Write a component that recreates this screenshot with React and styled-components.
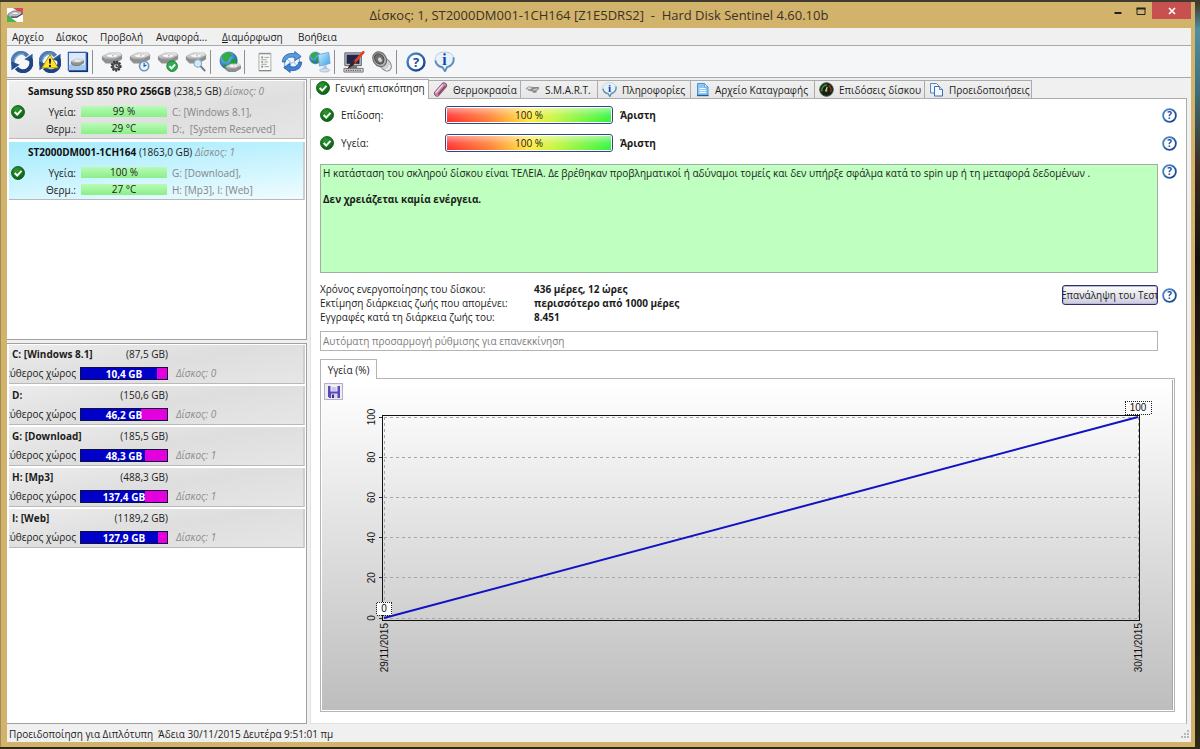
import React from "react";
import styled, { createGlobalStyle, css } from "styled-components";

const UI_FONT = `"Open Sans", "Noto Sans", sans-serif`;

const GlobalStyle = createGlobalStyle`
  * { box-sizing: border-box; }
  body { margin: 0; font-family: ${UI_FONT}; font-size: 10px; line-height: 14px; color: #1c1c1c; }
  button, input { font: inherit; color: inherit; }
`;

const Desktop = styled.div`
  min-height: 100vh;
  display: flex;
  padding: 2px 5px 2px 0;
  background: linear-gradient(to bottom, #3f3b2c 0, #3f3b2c 3px, #4f8fa3 30px, #3d6f7c 90px, #3a2a20 170px, #15100e 260px, #35271b 480px, #1c1b12 600px, #2c2a14 100%);
`;

const Window = styled.div`
  flex: 1;
  min-width: 0;
  display: flex;
  flex-direction: column;
  padding: 0 4px 5px 7px;
  background: #d2b36c;
  box-shadow: inset 1px 0 #a08a55;
`;

const TitleBar = styled.header`
  display: grid;
  grid-template-columns: 85px 1fr 85px;
  align-items: center;
  height: 26px;
`;

const Title = styled.h1`
  margin: 0;
  text-align: center;
  font-size: 13px;
  font-weight: 400;
  line-height: 20px;
  white-space: pre;
  color: #3b3222;
`;

const WindowControls = styled.div`
  display: flex;
  align-self: flex-start;
`;

const WindowButton = styled.button`
  display: flex;
  align-items: center;
  justify-content: center;
  width: ${(p) => (p.$close ? 39 : 23)}px;
  height: 17px;
  padding: 0;
  border: 0;
  background: ${(p) => (p.$close ? "#c75050" : "transparent")};
`;

const MenuBar = styled.nav`
  display: flex;
  height: 18px;
  background: #f0f0f0;
  border-bottom: 1px solid #a9a9a9;
`;

const MenuButton = styled.button`
  flex: none;
  width: ${(p) => p.$width}px;
  padding: 0 0 0 5px;
  border: 0;
  background: none;
  text-align: left;
  white-space: nowrap;
`;

const Toolbar = styled.div`
  display: flex;
  align-items: center;
  height: 32px;
  padding-left: 1px;
  background: #f5f6f8;
  border-bottom: 1px solid #a9a9a9;
`;

const ToolButton = styled.button`
  display: flex;
  align-items: center;
  justify-content: center;
  width: 28px;
  height: 28px;
  padding: 0;
  border: 0;
  background: none;
`;

const ToolSeparator = styled.span`
  width: 6px;
  height: 24px;
  border-left: 1px solid #8f8f8f;
`;

const Body = styled.div`
  flex: 1;
  display: flex;
  min-height: 0;
  padding-top: 1px;
  background: #f0f0f0;
`;

const Sidebar = styled.aside`
  flex: none;
  width: 300px;
  margin-right: 3px;
  display: flex;
  flex-direction: column;
  gap: 3px;
`;

const ListPanel = styled.section`
  flex: ${(p) => (p.$grow ? "1" : "none")};
  min-height: ${(p) => (p.$grow ? 0 : 261)}px;
  display: flex;
  flex-direction: column;
  gap: ${(p) => (p.$grow ? 2 : 3)}px;
  padding: 1px 1px 1px 2px;
  background: #fff;
  border: 1px solid #a0a0a0;
  border-left: 0;
`;

const itemSurface = css`
  border-right: 2px solid #cfcfcf;
  border-bottom: 1px solid #b9b9b9;
`;

const DiskItem = styled.article`
  ${itemSurface}
  display: grid;
  grid-template-columns: 16px 44px 86px 1fr;
  grid-template-rows: 22px 17px 17px;
  column-gap: 5px;
  align-items: center;
  height: 58px;
  padding-left: 2px;
  background: ${(p) =>
    p.$selected
      ? "linear-gradient(175deg, #a6ebfd 0, #bdf1fe 35%, #effcff 100%)"
      : "linear-gradient(170deg, #f0f0f0 0, #dfdfdf 60%, #e6e6e6 100%)"};
`;

const DiskTitle = styled.h2`
  grid-column: 1 / -1;
  margin: 0;
  padding: 0 0 3px 17px;
  font-size: 10px;
  font-weight: 400;
  white-space: nowrap;
  b { color: #111; }
`;

const Muted = styled.span`
  color: #8c8c8c;
  font-style: italic;
`;

const StatusCell = styled.span`
  grid-row: 2 / span 2;
  grid-column: 1;
  display: flex;
  align-self: start;
  padding-top: 2px;
`;

const StatLabel = styled.span`
  grid-column: 2;
  text-align: right;
`;

const StatBar = styled.span`
  height: 11px;
  line-height: 11px;
  text-align: center;
  background: linear-gradient(#b9fbb6, #8aef88);
`;

const VolumeList = styled.span`
  color: #858585;
  white-space: pre;
`;

const VolumeItem = styled.article`
  ${itemSurface}
  display: grid;
  grid-template-columns: 67px 88px 1fr;
  grid-template-rows: 18px 20px;
  column-gap: 4px;
  align-items: center;
  height: 39px;
  background: linear-gradient(170deg, #ececec 0, #dedede 50%, #e6e6e6 100%);
`;

const VolumeHead = styled.div`
  grid-column: 1 / span 2;
  display: flex;
  justify-content: space-between;
  padding-left: 3px;
`;

const ClippedLabel = styled.span`
  grid-column: 1;
  display: flex;
  justify-content: flex-end;
  overflow: hidden;
  white-space: nowrap;
`;

const SpaceBar = styled.span`
  height: 13px;
  line-height: 12px;
  border: 1px solid #101040;
  text-align: center;
  font-weight: 700;
  color: #fff;
`;

const VolumeDisk = styled(Muted)`
  padding-left: 4px;
`;

const Main = styled.main`
  flex: 1;
  min-width: 0;
  display: flex;
  flex-direction: column;
`;

const TabStrip = styled.div`
  display: flex;
  align-items: flex-end;
  height: 19px;
`;

const Tab = styled.button`
  flex: none;
  display: flex;
  align-items: center;
  gap: 5px;
  width: ${(p) => p.$width}px;
  height: ${(p) => (p.$active ? 20 : 18)}px;
  margin-bottom: ${(p) => (p.$active ? -1 : 0)}px;
  padding: 0 0 ${(p) => (p.$active ? 3 : 0)}px ${(p) => (p.$active ? 5 : 4)}px;
  border: 1px solid #acacac;
  border-left-width: ${(p) => (p.$active ? 1 : 0)}px;
  border-bottom: 0;
  background: ${(p) => (p.$active ? "#fff" : "linear-gradient(#f0f0f0, #e6e6e6)")};
  position: relative;
  white-space: nowrap;
`;

const Page = styled.section`
  flex: 1;
  display: flex;
  flex-direction: column;
  margin-right: 4px;
  padding: 2px 9px 11px 9px;
  background: #fff;
  border: 1px solid #acacac;
  border-left-color: #e0e0e0;
  border-bottom-color: #e0e0e0;
`;

const Row = styled.div`
  display: flex;
  align-items: ${(p) => (p.$top ? "flex-start" : "center")};
  gap: 4px;
`;

const GaugeRow = styled(Row)`
  height: 28px;
`;

const ActionRow = styled(Row)`
  padding-top: 3px;
`;

const GaugeLabel = styled.span`
  display: flex;
  align-items: center;
  gap: 7px;
  width: 121px;
`;

const Gauge = styled.span`
  width: 168px;
  height: 18px;
  padding: 1px;
  border: 1px solid #34457e;
  border-radius: 3px;
  background: #fff;
`;

const GaugeFill = styled.span`
  display: block;
  height: 14px;
  line-height: 14px;
  text-align: center;
  background: linear-gradient(rgba(255, 255, 255, 0.5), rgba(255, 255, 255, 0.15) 50%, rgba(255, 255, 255, 0)),
    linear-gradient(to right, #ff2a2a 0, #ff7a30 25%, #ffe93a 50%, #c8f53c 65%, #2cf53a 100%);
`;

const Rating = styled.b`
  flex: 1;
  padding-left: 3px;
`;

const HelpButton = styled.button`
  display: flex;
  width: 15px;
  height: 15px;
  padding: 0;
  border: 0;
  background: none;
`;

const Message = styled.div`
  flex: 1;
  min-height: 109px;
  padding: 2px;
  background: #bfffbf;
  border: 1px solid #9fb09f;
  line-height: 13px;
  p { margin: 0 0 13px; }
`;

const Facts = styled.dl`
  flex: 1;
  display: grid;
  grid-template-columns: 214px 1fr;
  margin: 0;
  dt { white-space: nowrap; }
  dd { margin: 0; font-weight: 700; }
`;

const Spaced = styled.div`
  margin-top: ${(p) => p.$gap}px;
`;

const RetestButton = styled.button`
  display: flex;
  align-items: center;
  justify-content: center;
  width: 96px;
  height: 20px;
  padding: 0;
  overflow: hidden;
  white-space: nowrap;
  border: 1px solid #2f2c66;
  border-radius: 3px;
  background: linear-gradient(#fdfdfd, #dcdce6 70%, #c9c9dc);
  box-shadow: inset 0 0 0 1px #b9b8dc;
`;

const NoteInput = styled.input`
  height: 20px;
  margin: 7px 19px 8px 0;
  padding: 0 2px;
  border: 1px solid #b4b4b4;
  background: #fff;
  color: #7d7d7d;
`;

const ChartTab = styled.button`
  align-self: flex-start;
  position: relative;
  height: 20px;
  width: 57px;
  margin-bottom: -1px;
  padding: 0;
  border: 1px solid #b4b4b4;
  border-bottom: 0;
  background: #fff;
`;

const ChartPanel = styled.div`
  flex: 1;
  display: flex;
  margin-right: 2px;
  padding: 1px;
  border: 1px solid #b4b4b4;
`;

const ChartSurface = styled.div`
  flex: 1;
  display: flex;
  flex-direction: column;
  align-items: stretch;
  padding: 3px 32px 89px 2px;
  border-right: 1px solid #a8a8a8;
  background: linear-gradient(#ffffff 0, #f6f6f6 15%, #bdbdbd 100%);
`;

const SaveButton = styled.button`
  display: flex;
  align-items: center;
  justify-content: center;
  width: 19px;
  height: 17px;
  padding: 0;
  border: 1px solid #b5b0c8;
  background: #ececf2;
`;

const PlotFrame = styled.div`
  flex: 1;
  display: flex;
  min-height: 160px;
  margin: 15px 0 0 58px;
  padding: 1px 1px 2px;
  border: 1px solid #111;
`;

const PlotSvg = styled.svg`
  flex: 1;
  width: 100%;
  height: auto;
  overflow: visible;
  font-family: "Liberation Sans", Arial, sans-serif;
  font-size: 10px;
  fill: #111;
`;

const StatusBar = styled.footer`
  display: flex;
  align-items: center;
  justify-content: space-between;
  height: 18px;
  padding: 1px 2px 0;
  background: #f0f0f0;
`;

/* ---------- icons ---------- */

const Icon = ({ size = 24, box = 24, children }) => (
  <svg width={size} height={size} viewBox={`0 0 ${box} ${box}`} aria-hidden="true">
    {children}
  </svg>
);

const HiddenSvg = styled.svg`
  position: absolute;
`;

const Defs = () => (
  <HiddenSvg width="0" height="0" aria-hidden="true">
    <defs>
      <linearGradient id="blue" x1="0" y1="0" x2="0" y2="1">
        <stop offset="0" stopColor="#7ba6d2" />
        <stop offset="1" stopColor="#1b3f78" />
      </linearGradient>
      <linearGradient id="metal" x1="0" y1="0" x2="0" y2="1">
        <stop offset="0" stopColor="#f2f2f2" />
        <stop offset="1" stopColor="#a5a5a5" />
      </linearGradient>
      <linearGradient id="sky" x1="0" y1="0" x2="1" y2="1">
        <stop offset="0" stopColor="#c9efff" />
        <stop offset="1" stopColor="#3f9fe6" />
      </linearGradient>
      <radialGradient id="ocean" cx="0.35" cy="0.3" r="0.8">
        <stop offset="0" stopColor="#7fd0ff" />
        <stop offset="1" stopColor="#0d4ba8" />
      </radialGradient>
      <radialGradient id="leaf" cx="0.4" cy="0.3" r="0.8">
        <stop offset="0" stopColor="#2c9a35" />
        <stop offset="1" stopColor="#045a0b" />
      </radialGradient>
      <linearGradient id="ring" x1="0" y1="0" x2="1" y2="1">
        <stop offset="0" stopColor="#4f93d8" />
        <stop offset="1" stopColor="#123a86" />
      </linearGradient>
    </defs>
  </HiddenSvg>
);

const RefreshArt = () => (
  <g>
    <path d="M3.600 16.500A9 9 0 0 1 18 5.500" fill="none" stroke="#4d7db3" strokeWidth="4.400" />
    <path d="M4 10A9 9 0 0 1 14 3.500" fill="none" stroke="#86aed6" strokeWidth="1.500" />
    <path d="M23.500 3v9.500L14.500 9z" fill="#2c5a97" />
    <path d="M20.400 7.500A9 9 0 0 1 6 18.500" fill="none" stroke="#1f4480" strokeWidth="4.400" />
    <path d="M.5 21v-9.500L9.500 15z" fill="#24508e" />
  </g>
);

const DiskArt = () => (
  <g>
    <path d="M1 6.500 9 2.500h12l2 2.500v4l-8 4.500H5L1 9.500z" fill="#8f8f8f" />
    <path d="M1 6 9 2h12l2 2.500-8 4.500H5z" fill="url(#metal)" stroke="#9a9a9a" strokeWidth=".5" />
    <ellipse cx="12" cy="5.200" rx="6" ry="2" fill="#fafafa" stroke="#b5b5b5" strokeWidth=".6" />
    <circle cx="13" cy="5.200" r=".8" fill="#999" />
  </g>
);

const GlobeArt = ({ cx, cy, r }) => (
  <g transform={`translate(${cx} ${cy}) scale(${r / 10})`}>
    <circle r="10" fill="url(#ocean)" stroke="#134a8d" strokeWidth=".6" />
    <path d="M-8-5C-5-9-1-10 2-9.500L4-6 1-3-1 1-4 2-7-1z" fill="#2fae3f" />
    <path d="M3-1 8-3 9.500 1 7 6 3 9 1 5z" fill="#239a35" />
    <path d="M-6 4-2 5-2 9-5 8z" fill="#239a35" />
  </g>
);

const art = {
  refresh: <RefreshArt />,
  refreshWarn: (
    <g>
      <RefreshArt />
      <path d="M12 4 21 18.500H3z" fill="#ffe62b" stroke="#9b7a00" strokeWidth=".9" strokeLinejoin="round" />
      <path d="M10.800 8.500h2.400l-.5 5.500h-1.400z" fill="#111" />
      <circle cx="12" cy="16.300" r="1.200" fill="#111" />
    </g>
  ),
  diskPanel: (
    <g>
      <path d="M2 1.500h21v21.500H2z" fill="#14336b" />
      <path d="M1.500 1.500h19.500v19.500H1.500z" fill="#dbe9f9" stroke="#2f62ad" strokeWidth="1.300" />
      <path d="M2 15h18v5H2z" fill="#a9c8ee" />
      <g transform="translate(4 7.500) scale(.62)"><path d="M1 6v5l5 3h9l8-5V4z" fill="#555" /><DiskArt /></g>
    </g>
  ),
  diskGear: (
    <g>
      <DiskArt />
      <circle cx="16.500" cy="16.500" r="5" fill="#5a5a5a" stroke="#333" strokeWidth="2" strokeDasharray="2 1.300" />
      <circle cx="16.500" cy="16.500" r="3" fill="#cfcfcf" stroke="#3a3a3a" />
      <path d="M16.500 14.500v2.300h2" stroke="#222" fill="none" />
    </g>
  ),
  diskClock: (
    <g>
      <DiskArt />
      <circle cx="16.500" cy="16.500" r="5" fill="#eaf4fc" stroke="#7394b4" strokeWidth="1.800" />
      <path d="M16.500 13v3.700l2.500-1.500" stroke="#1f5ea8" strokeWidth="1.300" fill="none" />
    </g>
  ),
  diskCheck: (
    <g>
      <DiskArt />
      <circle cx="16.500" cy="16.500" r="5.800" fill="#2fae4f" stroke="#1b7a34" />
      <path d="m13.500 16.500 2.300 2.500 4-4.500" stroke="#fff" strokeWidth="2" fill="none" />
    </g>
  ),
  diskFind: (
    <g>
      <DiskArt />
      <circle cx="14" cy="13.500" r="4" fill="#cfeaf8" stroke="#8fb2c6" strokeWidth="1.300" />
      <path d="m17 16.500 5 5.500" stroke="#6d7780" strokeWidth="2" />
    </g>
  ),
  globeDisk: (
    <g>
      <GlobeArt cx={10.5} cy={10.5} r={9.5} />
      <g transform="translate(6.500 12.500) scale(.75)"><path d="M1 7v4l5 3h9l8-5V5z" fill="#8b8b8b" /><DiskArt /></g>
    </g>
  ),
  report: (
    <g>
      <path d="M6.500 2.500h13v19h-13z" fill="#f6f8f6" stroke="#a5aaa5" />
      <path d="M7 3h12M6.500 21.500h13.500" stroke="#777" />
      <path d="M9 7h2M9 12h2M9 17h2" stroke="#6f8a78" strokeWidth="1.800" />
      <path d="M12.500 7h5M12.500 12h4M12.500 17h5M9 9.500h6M9 14.500h6" stroke="#9aa09a" />
    </g>
  ),
  mailSync: (
    <g>
      <path d="M4 6h16v13H4z" fill="#eef6fe" stroke="#6c9bd2" />
      <path d="m4 6.500 8 7 8-7M4 19l6-7M20 19l-6-7" fill="none" stroke="#8db4de" />
      <path d="M1.500 12C1.500 5 8 1.500 15 3V.5L22 6l-7 4.500V7C9.500 6 6 7 4.500 12z" fill="#5a9be6" stroke="#1c4f9c" strokeWidth=".8" />
      <path d="M22.500 12c0 7-6 10.500-12.500 9v2.500L3 18l7-4.500V17c5.500 1 8 0 9.500-5z" fill="#3f82d8" stroke="#1c4f9c" strokeWidth=".8" />
    </g>
  ),
  globeScreen: (
    <g>
      <GlobeArt cx={7} cy={7.5} r={6.5} />
      <path d="M10 4 21.500 1.500 23 13.500 11.500 16.500z" fill="url(#sky)" stroke="#6fa9d8" />
      <path d="m15 16 4-1 1 4-4 .5z" fill="#a9cbe6" />
      <ellipse cx="17" cy="21" rx="5.500" ry="2" fill="#cfdfec" stroke="#93aec4" strokeWidth=".7" />
    </g>
  ),
  screenBrush: (
    <g>
      <path d="M2 2h18v14H2z" fill="#b9bcc6" stroke="#55585f" />
      <path d="M4 4h14v10H4z" fill="#20264e" />
      <path d="M7 16h8l1 3H6z" fill="#777" />
      <path d="M1 19h21v4H1z" fill="#d5d5d5" stroke="#555" strokeWidth=".8" />
      <path d="M3 21h17" stroke="#333" strokeDasharray="1.500 1" />
      <path d="m22 1.500-9.500 11" stroke="#e0441e" strokeWidth="3" strokeLinecap="round" />
      <path d="m13.500 11-2 4.500L4.500 20c2-3 2.500-5.500 5.500-8z" fill="#38211a" />
    </g>
  ),
  speaker: (
    <g>
      <ellipse cx="16" cy="15" rx="5.500" ry="7.500" transform="rotate(-35 16 15)" fill="#d2d2d2" stroke="#858585" />
      <ellipse cx="9.500" cy="9" rx="7" ry="8.500" transform="rotate(-35 9.500 9)" fill="#b3b3b3" stroke="#6c6c6c" strokeWidth="1.200" />
      <ellipse cx="9" cy="8.500" rx="4.700" ry="6" transform="rotate(-35 9 8.500)" fill="#6d6d6d" stroke="#444" />
      <ellipse cx="9.800" cy="9.500" rx="2" ry="2.600" transform="rotate(-35 9.800 9.500)" fill="#d5d5d5" />
      <path d="M16 20.500c2.500-.5 4.500-2.500 4.500-5" stroke="#f5f5f5" strokeWidth="1.500" fill="none" />
    </g>
  ),
};

const HelpIcon = ({ size = 15 }) => (
  <Icon size={size} box={20}>
    <circle cx="10" cy="10" r="8.500" fill="#fff" stroke="url(#ring)" strokeWidth="2.400" />
    <text x="10" y="14.800" textAnchor="middle" fontFamily="Open Sans, sans-serif" fontWeight="700" fontSize="13" fill="#1d4c9e">?</text>
  </Icon>
);

const InfoIcon = ({ size = 15 }) => (
  <Icon size={size} box={20}>
    <path d="M10 1C4.500 1 1 4 1 8.500 1 12.500 4 15 8 15.500L10.500 19.500 12.500 15.300C16.500 14.500 19 12 19 8.500 19 4 15.500 1 10 1z" fill="#e6f2fa" stroke="#b4cde0" />
    <path d="M18.500 6c1 4-1.500 8.500-6 9.300l-2 4-2.500-3.800C5 15 2 12.500 1.300 9" fill="none" stroke="#5f8fb8" strokeWidth="1.800" />
    <text x="10" y="13.300" textAnchor="middle" fontFamily="Liberation Serif, serif" fontWeight="700" fontSize="15" fill="#1546a8">i</text>
  </Icon>
);

const CheckIcon = () => (
  <Icon size={14} box={14}>
    <circle cx="7" cy="7" r="6.500" fill="url(#leaf)" stroke="#07520d" strokeWidth=".8" />
    <path d="m3.700 7 2.500 2.600 4.300-4.800" fill="none" stroke="#fff" strokeWidth="2" />
  </Icon>
);

const tabIcons = {
  check: <CheckIcon />,
  thermo: (
    <Icon size={15} box={15}>
      <path d="M4 11.500 11 3.500" stroke="#7a4a66" strokeWidth="6" strokeLinecap="round" />
      <path d="M4 11.500 11 3.500" stroke="#c58aa8" strokeWidth="4.500" strokeLinecap="round" />
      <path d="M3 10.500 9.500 3" stroke="#f1dbe6" strokeWidth="1.300" strokeLinecap="round" />
      <path d="M5.500 12 12 4.500" stroke="#8e3d63" strokeWidth="1.200" strokeLinecap="round" />
    </Icon>
  ),
  smart: (
    <Icon size={15} box={24}>
      <g transform="translate(0 5)">
        <path d="M1 5 7 2l5 1 10 0 1 2-4 3-1 4-5 0-1-2-6-1z" fill="#8d8d8d" />
        <ellipse cx="7" cy="5" rx="4" ry="2" fill="#e0e0e0" stroke="#888" strokeWidth=".8" />
        <path d="M11 6 20 4l1 3-7 3z" fill="#c4c4c4" stroke="#666" strokeWidth=".8" />
      </g>
    </Icon>
  ),
  info: <InfoIcon />,
  log: (
    <Icon size={15} box={15}>
      <path d="M2.500 1.500h7l3.500 3.500v8.500H2.500z" fill="#8cc8f4" stroke="#4d94d2" />
      <path d="M9.500 1.500V5H13z" fill="#e7f5ff" stroke="#4d94d2" strokeWidth=".7" />
      <path d="M4.500 6.500h6M4.500 8.500h6.500M4.500 10.500h6.500" stroke="#fff" />
      <path d="M2 13.500h11.500" stroke="#1e5c9e" strokeWidth="1.400" />
    </Icon>
  ),
  perf: (
    <Icon size={15} box={15}>
      <circle cx="7.500" cy="7.500" r="6.800" fill="#142114" stroke="#4a5347" />
      <path d="M3 9.500a5 5 0 0 1 5-6.500" stroke="#2f9440" strokeWidth="1.600" fill="none" />
      <path d="M9.500 3.500a5 5 0 0 1 2 6.500" stroke="#8f3a26" strokeWidth="1.500" fill="none" />
      <path d="M7.200 8 8.200 5" stroke="#e8d98a" strokeWidth="1.200" />
      <circle cx="7.200" cy="8.500" r="1.200" fill="#c9b45c" />
    </Icon>
  ),
  alerts: (
    <Icon size={15} box={15}>
      <path d="M1.500 1.500h6l2 2v7.500h-8z" fill="#eaf4fd" stroke="#5a86c0" />
      <path d="M5.500 4.500h5l3 3v6.500h-8z" fill="#f2f8fe" stroke="#3f6db0" />
      <path d="M10.500 4.500v3h3" fill="#cfe2f6" stroke="#3f6db0" strokeWidth=".8" />
    </Icon>
  ),
};

const AppIcon = () => (
  <Icon size={16} box={16}>
    <path d="M0 1h16v14H0z" fill="#fff" />
    <path d="M6 1h10v7z" fill="#e4474c" />
    <path d="M0 8v7h10z" fill="#43b552" />
    <path d="m1 7 5-3h8l1 3-5 3.500H4L1 9z" fill="#b9bcc2" stroke="#5d5260" strokeWidth=".6" />
    <ellipse cx="8" cy="6.300" rx="3.300" ry="1.300" fill="#f4f4f4" stroke="#888" strokeWidth=".5" />
    <path d="M4 10h6l5-3" stroke="#3d3540" fill="none" />
  </Icon>
);

/* ---------- data ---------- */

const menus = [
  ["Αρχείο", 44],
  ["Δίσκος", 44],
  ["Προβολή", 56],
  ["Αναφορά...", 66],
  ["Διαμόρφωση", 76, true],
  ["Βοήθεια", 50],
];

const toolGroups = [
  ["refresh", "refreshWarn", "diskPanel"],
  ["diskGear", "diskClock", "diskCheck", "diskFind"],
  ["globeDisk"],
  ["report", "mailSync", "globeScreen"],
  ["screenBrush", "speaker"],
  ["help", "info"],
];

const disks = [
  { name: "Samsung SSD 850 PRO 256GB", size: "(238,5 GB)", disk: "Δίσκος: 0", health: "99 %", temp: "29 °C", v1: "C: [Windows 8.1],", v2: "D:,  [System Reserved]" },
  { name: "ST2000DM001-1CH164", size: "(1863,0 GB)", disk: "Δίσκος: 1", health: "100 %", temp: "27 °C", v1: "G: [Download],", v2: "H: [Mp3], I: [Web]", selected: true },
];

const volumes = [
  { name: "C: [Windows 8.1]", size: "(87,5 GB)", free: "10,4 GB", used: 88, disk: "Δίσκος: 0" },
  { name: "D:", size: "(150,6 GB)", free: "46,2 GB", used: 70, disk: "Δίσκος: 0" },
  { name: "G: [Download]", size: "(185,5 GB)", free: "48,3 GB", used: 74, disk: "Δίσκος: 1" },
  { name: "H: [Mp3]", size: "(488,3 GB)", free: "137,4 GB", used: 74, disk: "Δίσκος: 1" },
  { name: "I: [Web]", size: "(1189,2 GB)", free: "127,9 GB", used: 89, disk: "Δίσκος: 1" },
];

const tabs = [
  ["check", "Γενική επισκόπηση", 119],
  ["thermo", "Θερμοκρασία", 92],
  ["smart", "S.M.A.R.T.", 77],
  ["info", "Πληροφορίες", 93],
  ["log", "Αρχείο Καταγραφής", 124],
  ["perf", "Επιδόσεις δίσκου", 110],
  ["alerts", "Προειδοποιήσεις", 107],
];

const gauges = ["Επίδοση:", "Υγεία:"];

const facts = [
  ["Χρόνος ενεργοποίησης του δίσκου:", "436 μέρες, 12 ώρες"],
  ["Εκτίμηση διάρκειας ζωής που απομένει:", "περισσότερο από 1000 μέρες"],
  ["Εγγραφές κατά τη διάρκεια ζωής του:", "8.451"],
];

const Help = () => (
  <HelpButton aria-label="Βοήθεια"><HelpIcon /></HelpButton>
);

const toolIcon = (name) => {
  if (name === "help") return <HelpIcon size={20} />;
  if (name === "info") return <InfoIcon size={21} />;
  return <Icon size={22}>{art[name]}</Icon>;
};

const Tag = ({ x, y, width, children }) => (
  <svg x={x} y={y} overflow="visible">
    <rect x={-width / 2} y="-16" width={width} height="13" fill="#fcfcfc" stroke="#222" strokeDasharray="1 1" shapeRendering="crispEdges" />
    <text x="0" y="-6" textAnchor="middle">{children}</text>
  </svg>
);

const HealthPlot = () => (
  <PlotSvg role="img" aria-label="Υγεία (%)">
    {[0, 20, 40, 60, 80, 100].map((v) => (
      <svg key={v} y={`${100 - v}%`} overflow="visible">
        <line x1="-5" x2="-2" y1="0" y2="0" stroke="#333" shapeRendering="crispEdges" />
        <line x1="0" x2="100%" y1="0" y2="0" stroke="#a6a6a6" strokeDasharray="3 3" shapeRendering="crispEdges" />
        <text transform="translate(-9 0) rotate(-90)" textAnchor="middle">{v}</text>
      </svg>
    ))}
    {[["0%", "29/11/2015"], ["100%", "30/11/2015"]].map(([x, label]) => (
      <svg key={x} x={x} overflow="visible">
        <line x1="0" x2="0" y1="0" y2="100%" stroke="#a6a6a6" strokeDasharray="3 3" shapeRendering="crispEdges" />
        <svg y="100%" overflow="visible">
          <text transform="translate(4 5) rotate(-90)" textAnchor="end">{label}</text>
        </svg>
      </svg>
    ))}
    <line x1="0" y1="100%" x2="100%" y2="0" stroke="#1212c4" strokeWidth="2" />
    <Tag x="0%" y="100%" width={15}>0</Tag>
    <Tag x="100%" y="0%" width={26}>100</Tag>
  </PlotSvg>
);

export default function App() {
  return (
    <Desktop>
      <GlobalStyle />
      <Defs />
      <Window>
        <TitleBar>
          <AppIcon />
          <Title>{"Δίσκος: 1, ST2000DM001-1CH164 [Z1E5DRS2]  -  Hard Disk Sentinel 4.60.10b"}</Title>
          <WindowControls>
            <WindowButton aria-label="Ελαχιστοποίηση">
              <Icon size={10} box={10}><path d="M1.500 7h7" stroke="#222" strokeWidth="2" /></Icon>
            </WindowButton>
            <WindowButton aria-label="Μεγιστοποίηση">
              <Icon size={10} box={10}><path d="M1 2.500h8v6H1z" fill="none" stroke="#222" /><path d="M.5 2.500h9" stroke="#222" strokeWidth="2" /></Icon>
            </WindowButton>
            <WindowButton $close aria-label="Κλείσιμο">
              <Icon size={10} box={10}><path d="m2 2 6 6M8 2 2 8" stroke="#fff" strokeWidth="1.700" /></Icon>
            </WindowButton>
          </WindowControls>
        </TitleBar>
        <MenuBar>
          {menus.map(([label, width, key]) => (
            <MenuButton key={label} $width={width}>
              {key ? <><u>{label[0]}</u>{label.slice(1)}</> : label}
            </MenuButton>
          ))}
        </MenuBar>
        <Toolbar>
          {toolGroups.map((group, i) => (
            <React.Fragment key={group[0]}>
              {i > 0 && <ToolSeparator />}
              {group.map((name) => (
                <ToolButton key={name} aria-label={name}>{toolIcon(name)}</ToolButton>
              ))}
            </React.Fragment>
          ))}
        </Toolbar>
        <Body>
          <Sidebar>
            <ListPanel>
              {disks.map((d) => (
                <DiskItem key={d.name} $selected={d.selected}>
                  <DiskTitle><b>{d.name}</b> {d.size} <Muted>{d.disk}</Muted></DiskTitle>
                  <StatusCell><CheckIcon /></StatusCell>
                  <StatLabel>Υγεία:</StatLabel>
                  <StatBar>{d.health}</StatBar>
                  <VolumeList>{d.v1}</VolumeList>
                  <StatLabel>Θερμ.:</StatLabel>
                  <StatBar>{d.temp}</StatBar>
                  <VolumeList>{d.v2}</VolumeList>
                </DiskItem>
              ))}
            </ListPanel>
            <ListPanel $grow>
              {volumes.map((v) => (
                <VolumeItem key={v.name}>
                  <VolumeHead><b>{v.name}</b><span>{v.size}</span></VolumeHead>
                  <ClippedLabel><span>Ελεύθερος χώρος</span></ClippedLabel>
                  <SpaceBar style={{ background: `linear-gradient(to right, #0000c8 ${v.used}%, #e400dc ${v.used}%)` }}>{v.free}</SpaceBar>
                  <VolumeDisk>{v.disk}</VolumeDisk>
                </VolumeItem>
              ))}
            </ListPanel>
          </Sidebar>
          <Main>
            <TabStrip>
              {tabs.map(([icon, label, width], i) => (
                <Tab key={label} $width={width} $active={i === 0}>{tabIcons[icon]}{label}</Tab>
              ))}
            </TabStrip>
            <Page>
              {gauges.map((g) => (
                <GaugeRow key={g}>
                  <GaugeLabel><CheckIcon />{g}</GaugeLabel>
                  <Gauge><GaugeFill>100 %</GaugeFill></Gauge>
                  <Rating>Άριστη</Rating>
                  <Help />
                </GaugeRow>
              ))}
              <Spaced $gap={7}>
                <Row $top>
                  <Message>
                    <p>Η κατάσταση του σκληρού δίσκου είναι ΤΕΛΕΙΑ. Δε βρέθηκαν προβληματικοί ή αδύναμοι τομείς και δεν υπήρξε σφάλμα κατά το spin up ή τη μεταφορά δεδομένων .</p>
                    <b>Δεν χρειάζεται καμία ενέργεια.</b>
                  </Message>
                  <Help />
                </Row>
              </Spaced>
              <Spaced $gap={9}>
                <Row $top>
                  <Facts>
                    {facts.map(([k, v]) => (
                      <React.Fragment key={k}><dt>{k}</dt><dd>{v}</dd></React.Fragment>
                    ))}
                  </Facts>
                  <ActionRow>
                    <RetestButton><span>Επανάληψη του Τεστ</span></RetestButton>
                    <Help />
                  </ActionRow>
                </Row>
              </Spaced>
              <NoteInput readOnly aria-label="Σημείωση" value="Αυτόματη προσαρμογή ρύθμισης για επανεκκίνηση" />
              <ChartTab>Υγεία (%)</ChartTab>
              <ChartPanel>
                <ChartSurface>
                  <SaveButton aria-label="Αποθήκευση">
                    <Icon size={14} box={14}>
                      <path d="M1 1h12v12H2.500L1 11.500z" fill="#5a48b8" />
                      <path d="M3.500 1h7v5.500h-7z" fill="#f2f0fb" />
                      <path d="M4.500 3h5M4.500 5h5" stroke="#a79fd6" />
                      <path d="M4 8.500h6.500V13H4z" fill="#d9d5ee" />
                      <path d="M5 9.500h2V13H5z" fill="#3a2b8c" />
                    </Icon>
                  </SaveButton>
                  <PlotFrame><HealthPlot /></PlotFrame>
                </ChartSurface>
              </ChartPanel>
            </Page>
          </Main>
        </Body>
        <StatusBar>
          <span>Προειδοποίηση για Διπλότυπη&nbsp; Άδεια 30/11/2015 Δευτέρα 9:51:01 πμ</span>
          <Icon size={9} box={9}><path d="M7 1h2v2H7zM4 4h2v2H4zM7 4h2v2H7zM1 7h2v2H1zM4 7h2v2H4zM7 7h2v2H7z" fill="#b8b8b8" /></Icon>
        </StatusBar>
      </Window>
    </Desktop>
  );
}
